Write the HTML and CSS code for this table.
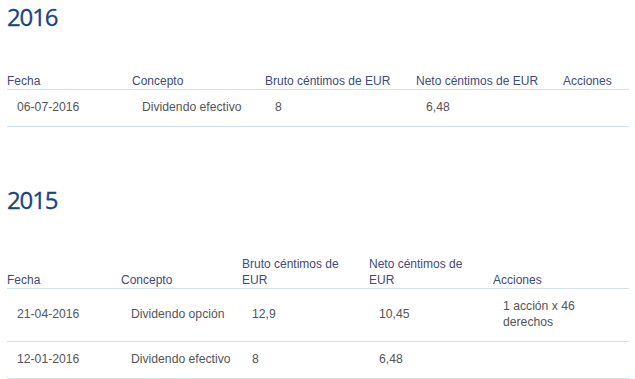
FILE: index.html
```html
<!DOCTYPE html>
<html lang="es">
<head>
<meta charset="utf-8">
<title>Dividendos</title>
<link rel="stylesheet" href="styles.css">
</head>
<body>
<section class="year">
  <h2 class="year-title">2016</h2>
  <table class="div-table">
    <colgroup>
      <col class="c125"><col class="c133"><col class="c151"><col class="c147"><col>
    </colgroup>
    <thead>
      <tr><th>Fecha</th><th>Concepto</th><th>Bruto céntimos de EUR</th><th>Neto céntimos de EUR</th><th>Acciones</th></tr>
    </thead>
    <tbody>
      <tr><td>06-07-2016</td><td>Dividendo efectivo</td><td>8</td><td>6,48</td><td></td></tr>
    </tbody>
  </table>
</section>
<section class="year year-next">
  <h2 class="year-title">2015</h2>
  <table class="div-table">
    <colgroup>
      <col class="c114"><col class="c121"><col class="c127"><col class="c124"><col>
    </colgroup>
    <thead>
      <tr><th>Fecha</th><th>Concepto</th><th>Bruto céntimos de EUR</th><th>Neto céntimos de EUR</th><th>Acciones</th></tr>
    </thead>
    <tbody>
      <tr><td>21-04-2016</td><td>Dividendo opción</td><td>12,9</td><td>10,45</td><td>1 acción x 46 derechos</td></tr>
      <tr><td>12-01-2016</td><td>Dividendo efectivo</td><td>8</td><td>6,48</td><td></td></tr>
    </tbody>
  </table>
</section>
</body>
</html>
```
FILE: styles.css
```css
html, body {
  margin: 0;
  background: #ffffff;
}
body {
  padding: 3px 6px 0 7px;
  font-family: "Liberation Sans", Arial, sans-serif;
  font-size: 12px;
}
.year-title {
  margin: 0 0 42px 0;
  font-family: "Open Sans", "Liberation Sans", sans-serif;
  font-weight: 400;
  font-size: 24px;
  line-height: 28px;
  color: #17467f;
  letter-spacing: -1.1px;
  -webkit-text-stroke: 0.3px #17467f;
}
.year-next {
  margin-top: 59px;
}
.div-table {
  width: 622px;
  border-collapse: collapse;
  table-layout: fixed;
}
.c125 { width: 125px; }
.c133 { width: 133px; }
.c151 { width: 151px; }
.c147 { width: 147px; }
.c114 { width: 114px; }
.c121 { width: 121px; }
.c127 { width: 127px; }
.c124 { width: 124px; }
.div-table th {
  text-align: left;
  vertical-align: bottom;
  font-weight: 400;
  color: #3e4b7b;
  line-height: 16px;
  padding: 0 10px 0 0;
  border-bottom: 1px solid #d5e1ea;
}
.div-table td {
  text-align: left;
  vertical-align: middle;
  color: #555555;
  font-size: 12.2px;
  line-height: 16px;
  padding: 9px 10px 11px 10px;
  border-bottom: 1px solid #d5e1ea;
}
```
